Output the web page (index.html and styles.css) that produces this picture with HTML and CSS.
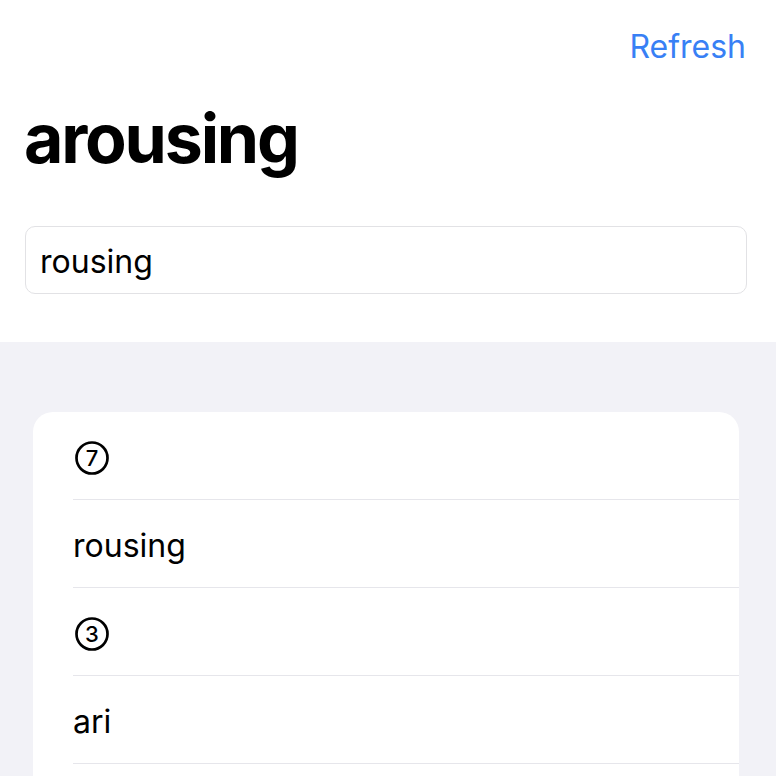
FILE: index.html
```html
<!DOCTYPE html>
<html>
<head>
<meta charset="utf-8">
<link rel="stylesheet" href="styles.css">
</head>
<body>
<div class="top">
  <div class="nav"><span class="refresh">Refresh</span></div>
  <h1 class="title">arousing</h1>
  <div class="input">rousing</div>
</div>
<div class="list-area">
  <div class="card">
    <div class="row">
      <svg class="circled" width="36" height="36" viewBox="0 0 36 36"><circle cx="18" cy="18" r="15.5" fill="none" stroke="#000" stroke-width="2.7"/><text x="18" y="25.8" text-anchor="middle" class="digit">7</text></svg>
    </div>
    <div class="row"><span class="row-text">rousing</span></div>
    <div class="row">
      <svg class="circled" width="36" height="36" viewBox="0 0 36 36"><circle cx="18" cy="18" r="15.5" fill="none" stroke="#000" stroke-width="2.7"/><text x="18" y="25.8" text-anchor="middle" class="digit">3</text></svg>
    </div>
    <div class="row"><span class="row-text">ari</span></div>
    <div class="row"></div>
  </div>
</div>
</body>
</html>
```
FILE: styles.css
```css
html, body {
  margin: 0;
  padding: 0;
  background: #f2f2f7;
  font-family: Inter, "Liberation Sans", sans-serif;
  color: #000;
}
.top {
  background: #fff;
  padding: 27px 0 48px 0;
}
.nav {
  display: flex;
  justify-content: flex-end;
  padding-right: 30px;
  height: 40px;
  align-items: center;
}
.refresh {
  color: #3880f5;
  font-size: 32px;
  line-height: 40px;
}
.title {
  margin: 31px 0 48px 24px;
  font-size: 68px;
  line-height: 80px;
  font-weight: 700;
  letter-spacing: -2.2px;
}
.input {
  margin: 0 29px 0 25px;
  height: 68px;
  box-sizing: border-box;
  border: 1px solid #e2e2e5;
  border-radius: 10px;
  display: flex;
  align-items: center;
  padding: 4px 0 0 14px;
  font-size: 32px;
  line-height: 40px;
}
.list-area {
  padding: 70px 37px 40px 33px;
}
.card {
  background: #fff;
  border-radius: 20px;
  padding-left: 40px;
}
.row {
  height: 88px;
  box-sizing: border-box;
  border-bottom: 1px solid #e6e6eb;
  display: flex;
  align-items: center;
  padding-top: 5px;
}
.row-text {
  font-size: 32px;
  line-height: 40px;
}
.circled {
  margin-left: 1px;
}
.digit {
  font-family: Inter, "Liberation Sans", sans-serif;
  font-size: 22px;
  font-weight: 500;
  fill: #000;
}
```
